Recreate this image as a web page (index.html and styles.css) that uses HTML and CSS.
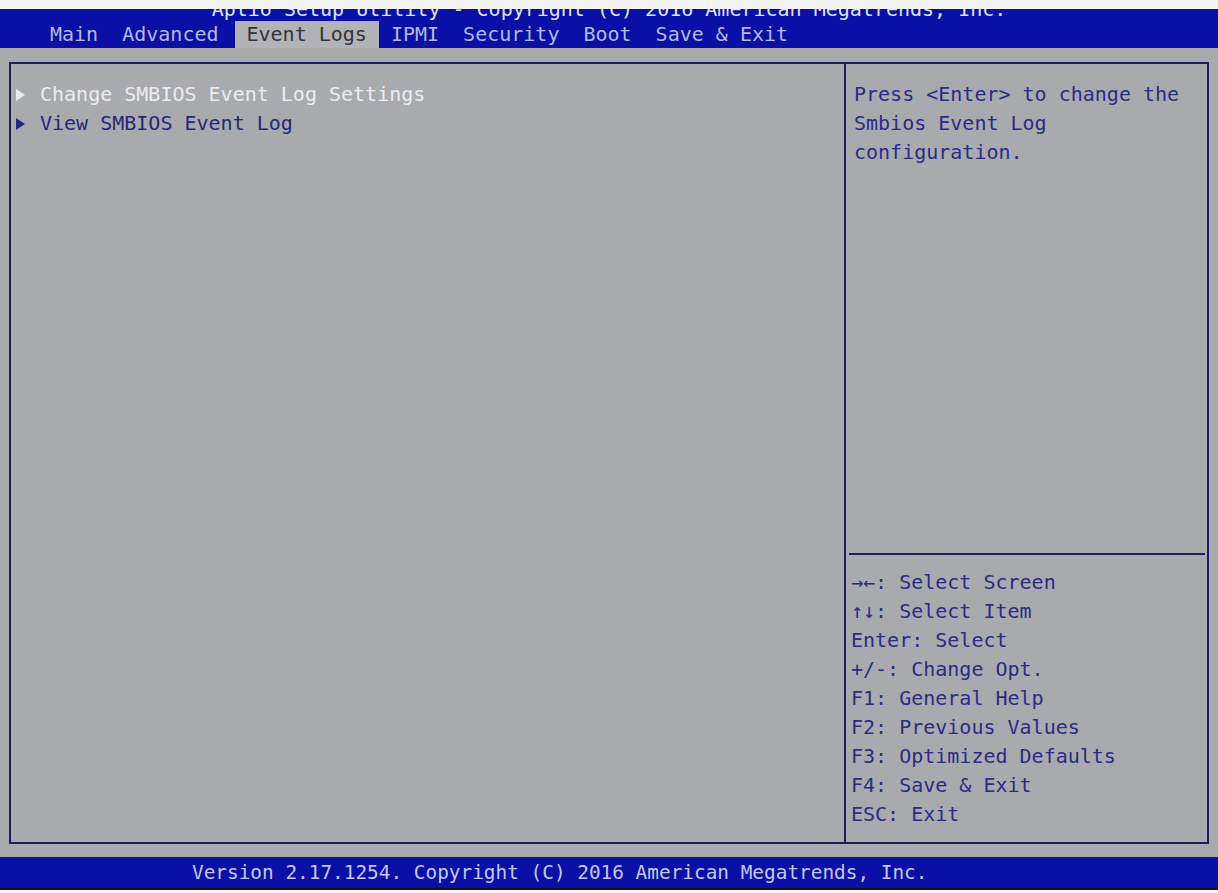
FILE: index.html
```html
<!DOCTYPE html>
<html lang="en">
<head>
    <meta charset="UTF-8">
    <meta name="viewport" content="width=device-width, initial-scale=1.0">
    <title>Aptio Setup Utility</title>
    <link rel="stylesheet" href="styles.css">
</head>
<body>
    <div class="screen">
        <div class="header">
            <div class="title">Aptio Setup Utility - Copyright (C) 2016 American Megatrends, Inc.</div>
            <div class="tabs">
                <span class="tab">Main</span>
                <span class="tab">Advanced</span>
                <span class="tab active">Event Logs</span>
                <span class="tab">IPMI</span>
                <span class="tab">Security</span>
                <span class="tab">Boot</span>
                <span class="tab">Save &amp; Exit</span>
            </div>
        </div>

        <div class="main">
            <div class="panel">
                <div class="menu">
                    <div class="item selected"><span class="arrow"></span>Change SMBIOS Event Log Settings</div>
                    <div class="item"><span class="arrow"></span>View SMBIOS Event Log</div>
                </div>
                <div class="side">
                    <div class="help">
                        Press &lt;Enter&gt; to change the<br>
                        Smbios Event Log<br>
                        configuration.
                    </div>
                    <div class="keys">
                        <div>&rarr;&larr;: Select Screen</div>
                        <div>&uarr;&darr;: Select Item</div>
                        <div>Enter: Select</div>
                        <div>+/-: Change Opt.</div>
                        <div>F1: General Help</div>
                        <div>F2: Previous Values</div>
                        <div>F3: Optimized Defaults</div>
                        <div>F4: Save &amp; Exit</div>
                        <div>ESC: Exit</div>
                    </div>
                </div>
            </div>
        </div>

        <div class="footer">Version 2.17.1254. Copyright (C) 2016 American Megatrends, Inc.</div>
    </div>
</body>
</html>
```

FILE: styles.css
```css
body {
    margin: 0;
    background: #f4f4f4;
    font-family: "DejaVu Sans Mono", "Liberation Mono", monospace;
    font-size: 20px;
}
.screen {
    width: 1218px;
    padding-top: 9px;
}
.header {
    height: 39px;
    background-color: #0a0fa5;
    overflow: hidden;
}
/* only the lower half of the title line shows, as on the real screen */
.title {
    margin-top: -10px;
    height: 22px;
    line-height: 20px;
    text-align: center;
    color: #dfe0f2;
}
.tabs {
    display: flex;
    padding-left: 38px;
    height: 27px;
    line-height: 27px;
}
.tab {
    padding: 0 12px;
    color: #b3b9e6;
}
.tab.active {
    background-color: #b2b3b6;
    color: #33343c;
    margin-left: 4px;
}
.main {
    background-color: #a9aaae;
    padding: 14px 9px 13px 9px;
}
.panel {
    height: 778px;
    border: 2px solid #1d1d66;
    display: grid;
    grid-template-columns: 835px 1fr;
}
.menu {
    border-right: 2px solid #1d1d66;
    padding: 16px 0 0 5px;
    line-height: 29px;
    color: #26277a;
}
.item.selected {
    color: #ececf0;
}
.arrow {
    display: inline-block;
    width: 0;
    height: 0;
    border-top: 6px solid transparent;
    border-bottom: 6px solid transparent;
    border-left: 9px solid currentColor;
    margin-right: 15px;
    vertical-align: 0;
}
.side {
    display: flex;
    flex-direction: column;
    color: #2a2c86;
    line-height: 29px;
}
.help {
    height: 473px;
    padding: 16px 0 0 5px;
    border-bottom: 2px solid #1d1d66;
    margin: 0 2px 0 3px;
}
.keys {
    padding: 13px 0 0 5px;
}
.footer {
    height: 31px;
    line-height: 31px;
    background-color: #0a0fa5;
    color: #c3c7ec;
    font-size: 19.4px;
    padding-left: 192px;
    border-bottom: 2px solid #101020;
}
```
